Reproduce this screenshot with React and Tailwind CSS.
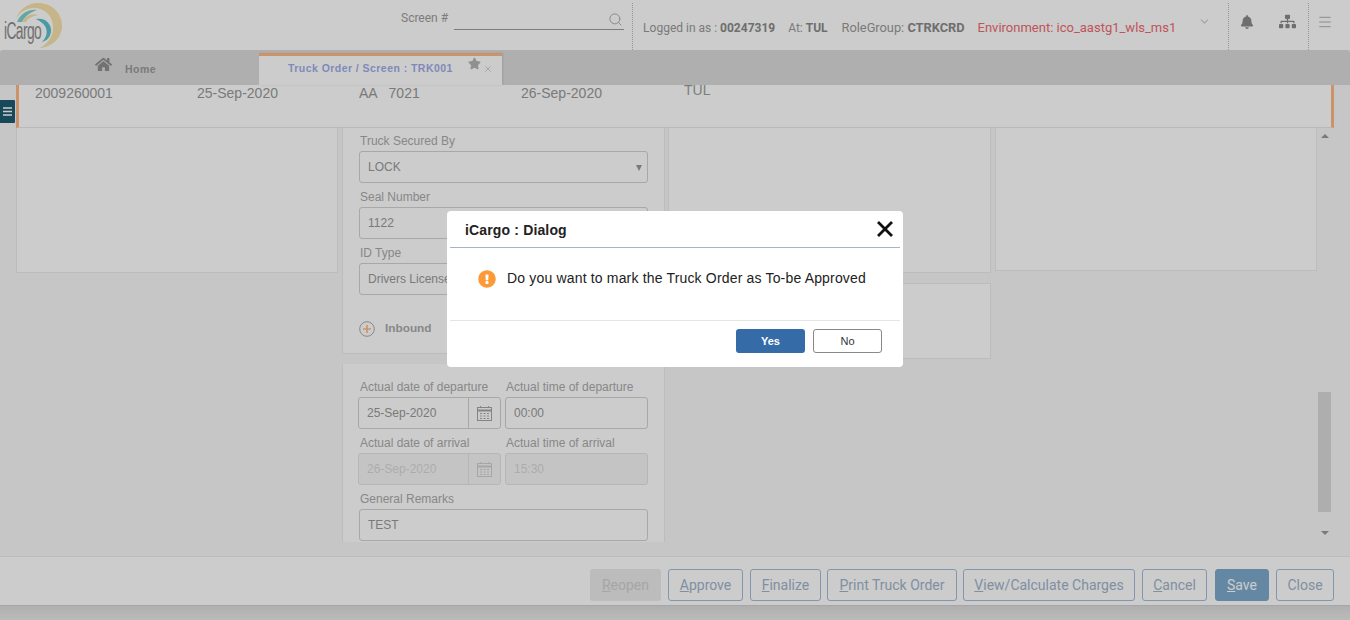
import { FaHome, FaStar, FaBell, FaSitemap, FaExclamationCircle } from 'react-icons/fa';
import { Search, ChevronDown, Menu, X } from 'lucide-react';

const ARIAL = "font-['Liberation_Sans',Arial,sans-serif]";
const ROBOTO = "font-['Roboto',Arial,sans-serif]";

const Logo = () => (
  <div className="relative w-[64px] h-[50px] shrink-0">
    <svg width="64" height="50" viewBox="0 0 64 50" className="absolute left-0 top-0">
      <path d="M38 3 C52 3 62 13 62 26 C62 38 52 47 40 48 C50 42 54 34 53 25 C52 15 44 8 34 8 C26 8 20 12 16 19 C19 10 27 3 38 3 Z" fill="#f7e3aa" />
      <path d="M17 22 C21 13 29 9 37 10 C31 12 25 16 22 22 Z" fill="#7fd0cc" />
      <path d="M36 19 C45 17 52 24 51 32 C50 38 46 41 42 42 C47 37 48 31 45 26 C43 23 40 21 36 19 Z" fill="#5cc2cc" />
      <path d="M22 22 C26 15 33 13 38 15 C33 16 28 18 26 22 Z" fill="#f7e3aa" />
    </svg>
    <span className={`absolute left-[4px] top-[18px] text-[23px] leading-[26px] tracking-[-1px] text-[#8c8c8c] scale-x-[0.6] origin-left ${ARIAL}`}>iCargo</span>
  </div>
);

const Label = ({ children, className = 'pl-px' }) => (
  <div className={`text-[12px] leading-[14px] text-[#aaa] ${ARIAL} ${className}`}>{children}</div>
);

const Field = ({ children, disabled, className = '' }) => (
  <div className={`h-[32px] border rounded-[3px] flex items-center px-[8px] text-[12px] ${disabled ? 'bg-[#f6f6f6] border-[#e4e4e4] text-[#d8d8d8]' : 'bg-white border-[#d2d2d2] text-[#999]'} ${ARIAL} ${className}`}>
    {children}
  </div>
);

const CalendarIcon = ({ color }) => (
  <svg width="15" height="15" viewBox="0 0 15 15" fill="none" stroke={color}>
    <rect x="0.5" y="1.5" width="14" height="13" />
    <path d="M0.5 4.5h14" strokeWidth="2" />
    <path d="M3.5 0v2M11.5 0v2" />
    <path d="M3 7.5h2M6.5 7.5h2M10 7.5h2M3 10h2M6.5 10h2M10 10h2M3 12.5h2M6.5 12.5h2M10 12.5h2" />
  </svg>
);

const DateField = ({ value, disabled }) => (
  <div className={`w-[143px] h-[32px] border rounded-[3px] flex text-[12px] ${disabled ? 'bg-[#f6f6f6] border-[#e4e4e4] text-[#d8d8d8]' : 'bg-white border-[#d2d2d2] text-[#999]'} ${ARIAL}`}>
    <div className="flex-1 flex items-center pl-[8px]">{value}</div>
    <div className={`w-[32px] border-l flex items-center justify-center ${disabled ? 'border-[#e4e4e4]' : 'border-[#d2d2d2]'}`}>
      <CalendarIcon color={disabled ? '#d0d0d0' : '#a6a6a6'} />
    </div>
  </div>
);

const FootButton = ({ w, u, rest, variant }) => {
  const styles = {
    outline: 'border border-[#a3bdd9] text-[#a0b4cb] bg-white',
    primary: 'border border-[#7da9cd] bg-[#7da9cd] text-white',
    disabled: 'bg-[#ebebeb] text-[#d0d0d0]',
  };
  return (
    <button className={`h-[32px] rounded-[3px] text-[14px] ${w} ${styles[variant || 'outline']} ${ROBOTO}`}>
      <u>{u}</u>{rest}
    </button>
  );
};

export default function App() {
  return (
    <div className="relative w-[1350px] h-[620px] overflow-hidden flex flex-col bg-[#f8f8f8]">
      {/* Top bar */}
      <header className="h-[50px] shrink-0 bg-white flex items-center">
        <Logo />
        <span className={`ml-[337px] -mt-[14px] text-[12px] text-[#9c9c9c] ${ROBOTO}`}>Screen #</span>
        <div className="ml-[6px] w-[170px] h-[24px] -mt-[14px] border-b border-[#9c9c9c] flex items-center justify-end pr-[1px] text-[#aaa]">
          <Search size={15} strokeWidth={1.5} className="mt-[4px]" />
        </div>
        <div className="ml-[8px] h-[47px] self-start mt-[3px] border-l border-dotted border-[#bbb]" />
        <div className={`ml-[10px] mt-[5px] flex items-center text-[12px] text-[#999] whitespace-nowrap ${ROBOTO}`}>
          <span>Logged in as : <b className="text-[#8a8a8a]">00247319</b></span>
          <span className="ml-[13px]">At: <b className="text-[#8a8a8a]">TUL</b></span>
          <span className="ml-[14px] text-[12.8px]">RoleGroup: <b className="text-[#8a8a8a]">CTRKCRD</b></span>
          <span className="ml-[13px] text-[13px] text-[#f06a72]">Environment: ico_aastg1_wls_ms1</span>
        </div>
        <ChevronDown size={13} className="ml-[22px] -mt-[8px] text-[#ccc]" />
        <div className="ml-[17px] h-[47px] self-start mt-[3px] border-l border-dotted border-[#bbb]" />
        <FaBell size={14} className="ml-[11px] -mt-[7px] text-[#8a8a8a]" />
        <FaSitemap size={17} className="ml-[25px] -mt-[7px] text-[#8a8a8a]" />
        <div className="ml-[12px] h-[47px] self-start mt-[3px] border-l border-dotted border-[#bbb]" />
        <Menu size={16} strokeWidth={1} className="ml-[8px] -mt-[7px] text-[#8a8a8a]" />
      </header>

      {/* Tabs */}
      <div className={`h-[35px] shrink-0 bg-[#dbdbdb] rounded-t-[3px] flex items-end ${ARIAL}`}>
        <div className="w-[259px] h-full flex items-center pl-[95px] text-[#8f8f8f]">
          <FaHome size={17} className="-mt-[6px]" />
          <span className="ml-[13px] mt-[4px] text-[10.5px] font-bold tracking-[0.5px] text-[#999]">Home</span>
        </div>
        <div className="relative w-[243px] h-[32px] bg-white border-t-[3px] border-[#ffb882] flex items-center pl-[29px] pb-[4px] text-[10.5px] font-bold tracking-[0.45px] text-[#a0ace8] shadow-[1px_0_2px_rgba(0,0,0,0.1)]">
          Truck Order / Screen : TRK001
          <FaStar size={13} className="absolute left-[209px] top-[1px] text-[#b5b5b5]" />
          <X size={10} strokeWidth={1.5} className="absolute left-[224px] top-[8px] text-[#b5b5b5]" />
        </div>
      </div>

      {/* Summary strip */}
      <div className={`h-[43px] shrink-0 mx-[16px] bg-white border-x-[3px] border-b border-x-[#ffb882] border-b-[#e8e8e8] grid grid-cols-[162px_162px_162px_163px_1fr] pl-[16px] text-[14px] text-[#999] ${ARIAL}`}>
        <span className="leading-[16px]">2009260001</span>
        <span className="leading-[16px]">25-Sep-2020</span>
        <span className="leading-[16px] whitespace-pre">AA   7021</span>
        <span className="leading-[16px]">26-Sep-2020</span>
        <span className="leading-[10px] text-[#9a9f98]">TUL</span>
      </div>

      {/* Panels */}
      <div className="h-[414px] shrink-0 flex pl-[16px] overflow-hidden">
        <div className="w-[322px] mr-[4px]">
          <div className="h-[145px] bg-white border-x border-b border-[#ececec]" />
        </div>

        <div className="w-[323px] mr-[3px] flex flex-col gap-[10px]">
          <div className={`h-[226px] shrink-0 bg-white border-x border-b border-[#ececec] px-[16px] pt-[6px] ${ARIAL}`}>
            <Label>Truck Secured By</Label>
            <Field className="mt-[3px] justify-between pr-[5px]">
              LOCK
              <span className="mt-[1px] w-0 h-0 border-x-[3px] border-t-[6px] border-x-transparent border-t-[#999]" />
            </Field>
            <div className="mt-[7px]"><Label>Seal Number</Label></div>
            <Field className="mt-[3px]">1122</Field>
            <div className="mt-[7px]"><Label>ID Type</Label></div>
            <Field className="mt-[3px] overflow-hidden whitespace-nowrap">Drivers License</Field>
            <div className="mt-[25px] flex items-center">
              <svg width="16" height="16" viewBox="0 0 16 16">
                <circle cx="8" cy="8" r="7.3" fill="none" stroke="#aaa" />
                <path d="M8 4v8M4 8h8" stroke="#ffb882" strokeWidth="1.6" />
              </svg>
              <span className="ml-[10px] text-[11.8px] font-bold text-[#aaa]">Inbound</span>
            </div>
          </div>

          <div className="flex-1 bg-white border-x border-[#ececec] px-[15px] pt-[16px]">
            <div className="grid grid-cols-[147px_143px]">
              <Label className="pl-[2px]">Actual date of departure</Label>
              <Label>Actual time of departure</Label>
              <div className="mt-[3px]"><DateField value="25-Sep-2020" /></div>
              <div className="mt-[3px]"><Field>00:00</Field></div>
              <div className="mt-[7px]"><Label className="pl-[2px]">Actual date of arrival</Label></div>
              <div className="mt-[7px]"><Label>Actual time of arrival</Label></div>
              <div className="mt-[3px]"><DateField value="26-Sep-2020" disabled /></div>
              <div className="mt-[3px]"><Field disabled>15:30</Field></div>
            </div>
            <div className="mt-[7px]"><Label className="pl-[2px]">General Remarks</Label></div>
            <Field className="mt-[3px] ml-px w-[289px]">TEST</Field>
          </div>
        </div>

        <div className="w-[323px] mr-[4px] flex flex-col gap-[10px] self-start">
          <div className="h-[145px] bg-white border-x border-b border-[#ececec]" />
          <div className="h-[76px] bg-white border border-[#ececec]" />
        </div>

        <div className="w-[322px]">
          <div className="h-[143px] bg-white border-x border-b border-[#ececec]" />
        </div>

        {/* Scrollbar */}
        <div className="relative w-[17px] ml-[1px]">
          <div className="absolute left-[3px] top-[6px] w-0 h-0 border-x-[4px] border-b-[4px] border-x-transparent border-b-[#999]" />
          <div className="absolute left-0 top-[264px] w-[13px] h-[120px] bg-[#dadada]" />
          <div className="absolute left-[3px] top-[403px] w-0 h-0 border-x-[4px] border-t-[4px] border-x-transparent border-t-[#999]" />
        </div>
      </div>

      {/* Footer actions */}
      <div className="mt-[14px] h-[49px] shrink-0 bg-white border-t border-[#ececec] flex items-start pl-[590px] pt-[12px]">
        <FootButton w="w-[71px]" u="R" rest="eopen" variant="disabled" />
        <div className="ml-[7px]"><FootButton w="w-[75px]" u="A" rest="pprove" /></div>
        <div className="ml-[7px]"><FootButton w="w-[71px]" u="F" rest="inalize" /></div>
        <div className="ml-[6px]"><FootButton w="w-[130px]" u="P" rest="rint Truck Order" /></div>
        <div className="ml-[6px]"><FootButton w="w-[172px]" u="V" rest="iew/Calculate Charges" /></div>
        <div className="ml-[7px]"><FootButton w="w-[65px]" u="C" rest="ancel" /></div>
        <div className="ml-[8px]"><FootButton w="w-[54px]" u="S" rest="ave" variant="primary" /></div>
        <div className="ml-[7px]"><FootButton w="w-[58px]" rest="Close" /></div>
      </div>
      <div className="flex-1 bg-gradient-to-b from-[#dcdcdc] to-[#eaeaea] border-t border-[#d0d0d0]" />

      {/* Side nav toggle */}
      <div className="absolute left-0 top-[100px] w-[15px] h-[23px] bg-[#1f5c72] flex items-center justify-center rounded-r-[1px]">
        <svg width="9" height="9" viewBox="0 0 9 9"><path d="M0 1h9M0 4.5h9M0 8h9" stroke="#fff" strokeWidth="1.6" /></svg>
      </div>

      {/* Modal backdrop */}
      <div className="absolute inset-0 bg-black/20" />

      {/* Dialog */}
      <div className={`absolute left-[447px] top-[211px] w-[456px] h-[156px] bg-white rounded-[4px] px-[3px] ${ARIAL}`}>
        <div className="h-[37px] border-b border-[#a8b4c0] flex items-center justify-between pl-[15px] pr-[6px]">
          <span className="mt-[2px] text-[14px] font-bold tracking-[0.15px] text-[#222]">iCargo : Dialog</span>
          <svg width="18" height="18" viewBox="0 0 18 18"><path d="M2 2l14 14M16 2L2 16" stroke="#111" strokeWidth="2.8" /></svg>
        </div>
        <div className="h-[73px] border-b border-[#e5e5e5] flex items-start pl-[28px] pt-[20px]">
          <FaExclamationCircle size={18} className="text-[#fb9a37] mt-[2px]" />
          <span className="ml-[11px] text-[14px] leading-[20px] tracking-[0.17px] text-[#222]">Do you want to mark the Truck Order as To-be Approved</span>
        </div>
        <div className="flex justify-end gap-[8px] pr-[18px] pt-[8px]">
          <button className="w-[69px] h-[24px] rounded-[3px] bg-[#356ca8] text-white text-[11px] font-bold">Yes</button>
          <button className="w-[69px] h-[24px] rounded-[3px] border border-[#888] bg-white text-[#333] text-[11px]">No</button>
        </div>
      </div>
    </div>
  );
}
